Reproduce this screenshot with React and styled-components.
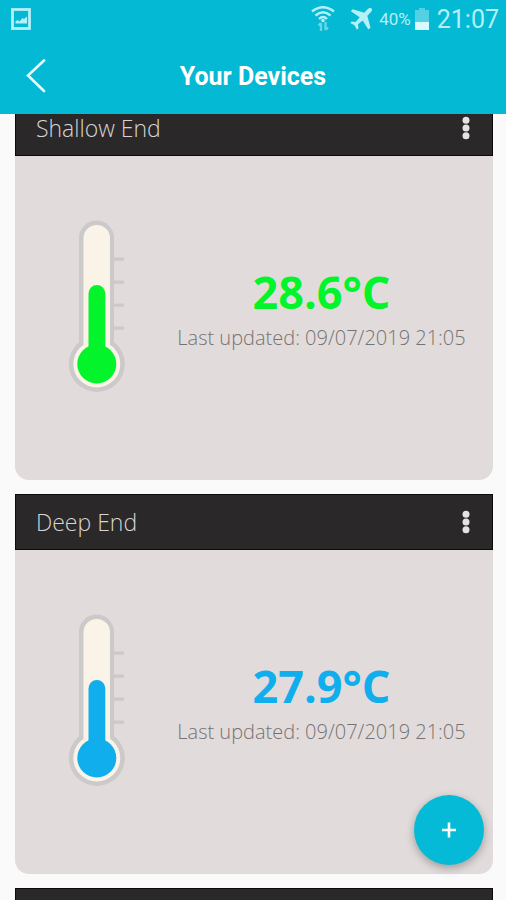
import styled, { createGlobalStyle } from "styled-components";

const GlobalStyle = createGlobalStyle`
  * {
    box-sizing: border-box;
  }
  body {
    margin: 0;
    background-color: #fafafa;
    font-family: "Open Sans", "Liberation Sans", sans-serif;
  }
`;

const Screen = styled.div`
  display: flex;
  flex-direction: column;
  height: 100vh;
  overflow: hidden;
`;

const Header = styled.header`
  flex: none;
  background-color: #04b9d4;
  color: #ffffff;
  font-family: Roboto, "Liberation Sans", sans-serif;
`;

const StatusBar = styled.div`
  display: flex;
  align-items: center;
  height: 38px;
  padding: 0 7px 0 11px;
  color: #b4f0f8;
`;

const StatusIcons = styled.div`
  display: flex;
  align-items: center;
  gap: 4px;
  margin-left: auto;
`;

const StatusIcon = styled.svg`
  display: block;
  flex: none;
`;

const Battery = styled.span`
  font-size: 17px;
`;

const Clock = styled.time`
  margin-left: 4px;
  padding-top: 2px;
  font-size: 25px;
  line-height: 36px;
`;

const TitleBar = styled.div`
  display: grid;
  grid-template-columns: 72px 1fr 72px;
  align-items: center;
  height: 76px;
`;

const Title = styled.h1`
  margin: 0;
  text-align: center;
  font-size: 25px;
  font-weight: 700;
`;

const IconButton = styled.button`
  display: flex;
  align-items: center;
  justify-content: center;
  height: 54px;
  padding: 0;
  border: none;
  background: none;
  color: inherit;
  cursor: pointer;
`;

const BackButton = styled(IconButton)`
  width: 72px;
`;

const MenuButton = styled(IconButton)`
  width: 52px;
`;

const DeviceList = styled.main`
  display: flex;
  flex-direction: column;
  flex: 1;
  gap: 14px;
  min-height: 0;
  padding: 0 13px 0 15px;
  overflow: hidden;

  /* the list rests slightly scrolled under the header */
  & > :first-child {
    margin-top: -14px;
  }
`;

const Card = styled.section`
  flex: none;
  border-radius: 0 0 14px 14px;
  overflow: hidden;
  background-color: #e1dcdb;
`;

const CardHeader = styled.div`
  display: flex;
  align-items: center;
  justify-content: space-between;
  height: 56px;
  padding-left: 20px;
  border: 1px solid #0c0a0a;
  background-color: #2a2828;
  color: #d6d4d4;
`;

const CardTitle = styled.h2`
  margin: 0;
  font-size: 23px;
  font-weight: 300;
  line-height: 24px;
`;

const CardBody = styled.div`
  display: flex;
  align-items: center;
  height: 324px;
  padding: 0 0 24px 53px;
`;

const Reading = styled.div`
  flex: 1;
  padding: 4px 0 0 24px;
  text-align: center;
`;

const Temperature = styled.p`
  margin: 0;
  color: ${(props) => props.$color};
  font-size: 45px;
  font-weight: 700;
  line-height: 60px;
`;

const Updated = styled.p`
  margin: 0;
  color: #767272;
  font-size: 20px;
  font-weight: 300;
  line-height: 32px;
`;

const AddButton = styled.button`
  position: fixed;
  right: 22px;
  bottom: 35px;
  display: flex;
  align-items: center;
  justify-content: center;
  width: 70px;
  height: 70px;
  padding: 0;
  border: none;
  border-radius: 50%;
  background-color: #04bad6;
  box-shadow: 0 3px 8px rgba(0, 0, 0, 0.3);
  cursor: pointer;
`;

const devices = [
  { name: "Shallow End", value: "28.6", color: "#04f42c", level: 65 },
  { name: "Deep End", value: "27.9", color: "#10aeec", level: 66 },
];

function Thermometer({ color, level }) {
  return (
    <svg width="58" height="172" viewBox="0 0 58 172" aria-hidden="true">
      <g fill="#cbc9c9">
        <rect x="11" y="0.5" width="35" height="150" rx="17.5" />
        <circle cx="28.8" cy="144" r="28" />
        {[39, 62, 85, 108].map((y) => (
          <rect key={y} x="45" y={y - 1.5} width="11" height="3.2" />
        ))}
      </g>
      <g fill="#faf3e8">
        <rect x="15.5" y="5" width="26.5" height="140" rx="13.2" />
        <circle cx="28.8" cy="144" r="23.5" />
      </g>
      <g fill={color}>
        <rect x="20.5" y={level} width="16.8" height={150 - level} rx="8.4" />
        <circle cx="28.8" cy="144" r="19.5" />
      </g>
    </svg>
  );
}

function DeviceCard({ device }) {
  return (
    <Card>
      <CardHeader>
        <CardTitle>{device.name}</CardTitle>
        <MenuButton aria-label={`${device.name} options`}>
          <svg width="10" height="24" viewBox="0 0 10 24" fill="#e4e2e2">
            <circle cx="5" cy="4.2" r="3.5" />
            <circle cx="5" cy="12" r="3.5" />
            <circle cx="5" cy="19.8" r="3.5" />
          </svg>
        </MenuButton>
      </CardHeader>
      <CardBody>
        <Thermometer color={device.color} level={device.level} />
        <Reading>
          <Temperature $color={device.color}>{device.value}°C</Temperature>
          <Updated>Last updated: 09/07/2019 21:05</Updated>
        </Reading>
      </CardBody>
    </Card>
  );
}

function Status() {
  return (
    <StatusBar>
      <StatusIcon width="20" height="22" viewBox="0 0 20 22">
        <rect x="1.5" y="1.5" width="17" height="19" fill="none" stroke="currentColor" strokeWidth="2.8" />
        <path d="M4.5 15.5V13.5l2-1.5 2 1.5 3-3.5 1.5 1L16 8.500v7z" fill="currentColor" />
      </StatusIcon>
      <StatusIcons>
        <StatusIcon width="24" height="26" viewBox="0 0 24 26" fill="none" stroke="currentColor">
          <path d="M1 5.5Q12 -3 23 5.5M4.5 9.5Q12 3 19.5 9.5M8 13Q12 9 16 13" strokeWidth="2.4" />
          <circle cx="12" cy="14.5" r="1.8" fill="currentColor" stroke="none" />
          <path d="M10 25v-8M7.5 19.5l2.5-2.5M14.5 16v8M17 21.5l-2.5 2.5" strokeWidth="2.4" opacity="0.55" />
        </StatusIcon>
        <StatusIcon width="36" height="24" viewBox="0 0 36 24">
          <path
            transform="translate(11 1)"
            d="M21.5 0.5c-1-.9-2.600-.5-3.700.5l-3.600 3.700L2.800 1.200.8 3.200l8.900 6L5.600 14l-3.800-.6L.3 15l4.200 2.300L6.900 21.700l1.600-1.500-.5-4 4.700-3.800 5.700 9 2.100-2-3.200-11.700 3.700-3.600c1.100-1.100 1.500-2.600.5-3.600z"
            fill="currentColor"
          />
        </StatusIcon>
        <Battery>40%</Battery>
        <StatusIcon width="14" height="22" viewBox="0 0 14 22" fill="currentColor">
          <path d="M4 0h6v2h4v12H0V2h4z" opacity="0.45" />
          <path d="M0 14h14v8H0z" fill="#d8fafc" />
        </StatusIcon>
        <Clock>21:07</Clock>
      </StatusIcons>
    </StatusBar>
  );
}

export default function App() {
  return (
    <>
      <GlobalStyle />
      <Screen>
        <Header>
          <Status />
          <TitleBar>
            <BackButton aria-label="Back">
              <svg width="20" height="34" viewBox="0 0 20 34" fill="none" stroke="#e4fbfd" strokeWidth="2.6" strokeLinecap="round">
                <path d="M18 1.5L2 16.5l16 15.5" />
              </svg>
            </BackButton>
            <Title>Your Devices</Title>
          </TitleBar>
        </Header>
        <DeviceList>
          {devices.map((device) => (
            <DeviceCard key={device.name} device={device} />
          ))}
          <Card>
            <CardHeader />
          </Card>
        </DeviceList>
        <AddButton aria-label="Add device">
          <svg width="14" height="16" viewBox="0 0 14 16" stroke="#ffffff" strokeWidth="2.6">
            <path d="M7 0.5v15M0 8h14" />
          </svg>
        </AddButton>
      </Screen>
    </>
  );
}
